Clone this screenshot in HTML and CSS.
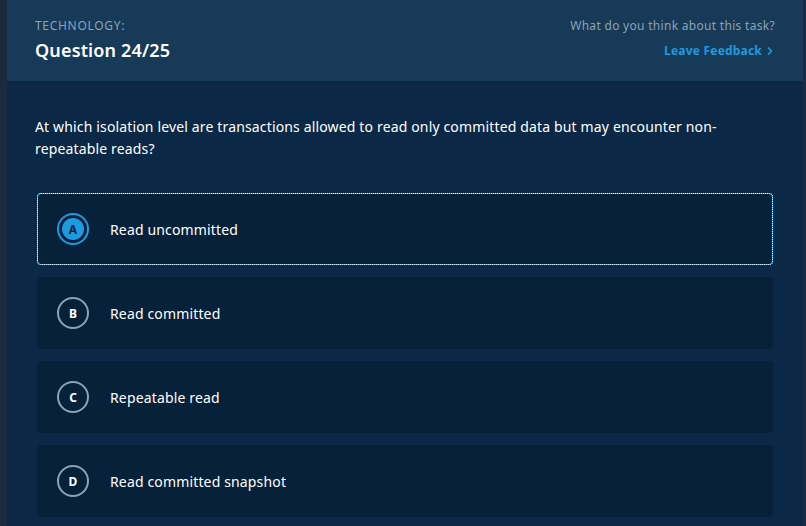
FILE: index.html
```html
<!DOCTYPE html>
<html>
<head>
<meta charset="utf-8">
<link rel="stylesheet" href="styles.css">
</head>
<body>
<div class="panel">
  <header class="head">
    <div class="head-left">
      <div class="category">TECHNOLOGY:</div>
      <div class="title">Question 24/25</div>
    </div>
    <div class="head-right">
      <div class="ask">What do you think about this task?</div>
      <a class="feedback" href="#">Leave Feedback
        <svg width="8" height="10" viewBox="0 0 8 10"><path d="M2 1.5 L5.5 5 L2 8.5" fill="none" stroke="#1e9be0" stroke-width="1.6"/></svg>
      </a>
    </div>
  </header>
  <main class="body">
    <p class="question">At which isolation level are transactions allowed to read only committed data but may encounter non-repeatable reads?</p>
    <div class="options">
      <div class="option selected"><span class="badge"><span class="dot">A</span></span><span class="label">Read uncommitted</span></div>
      <div class="option"><span class="badge">B</span><span class="label">Read committed</span></div>
      <div class="option"><span class="badge">C</span><span class="label">Repeatable read</span></div>
      <div class="option"><span class="badge">D</span><span class="label">Read committed snapshot</span></div>
    </div>
  </main>
</div>
</body>
</html>
```
FILE: styles.css
```css
html, body { margin: 0; padding: 0; }
body {
  background: #1b2b3b;
  font-family: "Noto Sans", "Open Sans", sans-serif;
  width: 806px;
  height: 526px;
  overflow: hidden;
}
.panel {
  margin-left: 7px;
  width: 796px;
  height: 526px;
  background: #0b2946;
}
.head {
  height: 81px;
  background: #163a57;
  box-sizing: border-box;
  padding: 17px 28px 0 28px;
  display: flex;
  justify-content: space-between;
}
.category {
  font-size: 12px;
  letter-spacing: 0.7px;
  color: #8ba3b7;
  line-height: 18px;
}
.title {
  font-size: 18px;
  font-weight: 600;
  letter-spacing: 0.15px;
  color: #ffffff;
  line-height: 26px;
  margin-top: 2px;
}
.head-right { text-align: right; }
.ask {
  font-size: 12px;
  letter-spacing: 0.3px;
  color: #8ba3b7;
  line-height: 18px;
}
.feedback {
  display: inline-flex;
  align-items: center;
  gap: 4px;
  margin-top: 7px;
  font-size: 12px;
  font-weight: 700;
  letter-spacing: 0.2px;
  color: #1e9be0;
  text-decoration: none;
  line-height: 18px;
  margin-right: 1px;
}
.body {
  padding: 35px 30px 0 28px;
}
.question {
  margin: 0;
  font-size: 14px;
  letter-spacing: 0.15px;
  line-height: 22px;
  color: #ffffff;
}
.options {
  margin-top: 33px;
  margin-left: 2px;
  display: flex;
  flex-direction: column;
  gap: 12px;
}
.option {
  height: 72px;
  box-sizing: border-box;
  background: #08213a;
  border-radius: 4px;
  display: flex;
  align-items: center;
  padding-left: 20px;
}
.option.selected {
  border: 1px solid #1e9be0;
  outline: 1px dotted #ffffff;
  outline-offset: -1px;
  padding-left: 19px;
}
.badge {
  width: 32px;
  height: 32px;
  box-sizing: border-box;
  border-radius: 50%;
  border: 2px solid #8ba3b7;
  display: flex;
  align-items: center;
  justify-content: center;
  color: #ffffff;
  font-size: 12px;
  font-weight: 700;
}
.selected .badge { border-color: #1e9be0; }
.dot {
  width: 22px;
  height: 22px;
  border-radius: 50%;
  background: #1e9be0;
  color: #08213a;
  display: flex;
  align-items: center;
  justify-content: center;
}
.label {
  margin-left: 21px;
  font-size: 14px;
  letter-spacing: 0.15px;
  color: #ffffff;
}
```
